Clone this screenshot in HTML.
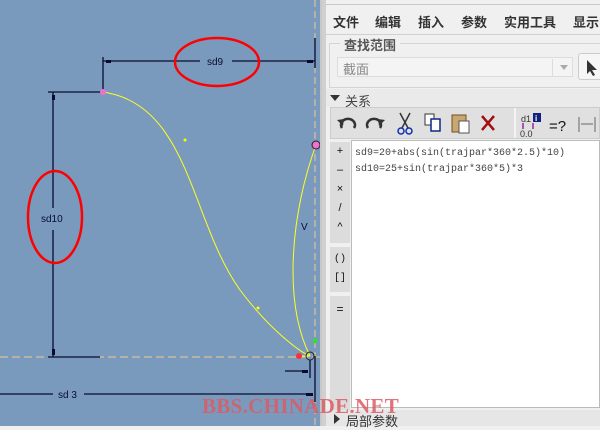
<!DOCTYPE html>
<html><head><meta charset="utf-8"><style>
*{margin:0;padding:0;box-sizing:border-box}
body{width:600px;height:426px;overflow:hidden;position:relative;background:#f0f0f0;font-family:"Liberation Sans","Noto Sans CJK SC",sans-serif}
.a{position:absolute}
.m{top:12px;font-size:13px;color:#333;font-weight:bold}
.mono{font-family:"Liberation Mono","Noto Sans CJK SC",monospace;font-size:10px;color:#444}
</style></head><body>
<svg class="a" style="left:0;top:0" width="322" height="426">
<rect width="322" height="426" fill="#7a9abd"/>
<line x1="315" y1="0" x2="315" y2="426" stroke="#f0c890" stroke-width="1" stroke-dasharray="7,4"/>
<line x1="0" y1="357" x2="320" y2="357" stroke="#f0c890" stroke-width="1" stroke-dasharray="8,4"/>
<g stroke="#0a0a30" stroke-width="1.3" fill="none">
<line x1="103" y1="57" x2="103" y2="92"/><line x1="315" y1="38" x2="315" y2="68"/>
<line x1="103" y1="61" x2="200" y2="61"/><line x1="232" y1="61" x2="315" y2="61"/>
<line x1="48" y1="92" x2="103" y2="92"/><line x1="48" y1="357" x2="100" y2="357"/>
<line x1="53" y1="92" x2="53" y2="208"/><line x1="53" y1="230" x2="53" y2="357"/>
<line x1="0" y1="394" x2="53" y2="394"/><line x1="84" y1="394" x2="313" y2="394"/>
<line x1="315" y1="356" x2="315" y2="402"/><line x1="310" y1="360" x2="310" y2="378"/>
<line x1="285" y1="371" x2="308" y2="371"/>
</g>
<g fill="#0a0a30"><rect x="106" y="60" width="5" height="3"/><rect x="307" y="60" width="6" height="3"/><rect x="52" y="95" width="3" height="5"/><rect x="52" y="349" width="3" height="6"/><rect x="306" y="393" width="7" height="3"/><rect x="302" y="370" width="6" height="3"/></g>
<g font-family="Liberation Sans,sans-serif" font-size="10" fill="#0a0a30">
<text x="207" y="65">sd9</text><text x="41" y="222">sd10</text><text x="58" y="398">sd 3</text><text x="301" y="230">V</text></g>
<g stroke="#ffff20" stroke-width="1" fill="none">
<path d="M103,92 C190,105 190,220 240,290 C270,330 300,352 310,356"/>
<path d="M316,145 C292,210 282,300 310,356"/>
<line x1="300" y1="356" x2="310" y2="356"/></g>
<circle cx="185" cy="140" r="1.5" fill="#ff0"/><circle cx="258" cy="308" r="1.5" fill="#ff0"/>
<circle cx="103" cy="92" r="3" fill="#f070d0"/><circle cx="316" cy="145" r="4" fill="#f070d0" stroke="#222" stroke-width="1"/>
<circle cx="299" cy="356" r="3" fill="#ff3030"/><circle cx="315" cy="341" r="2.5" fill="#30e030"/>
<circle cx="310" cy="356" r="4" fill="none" stroke="#222" stroke-width="1"/>
<ellipse cx="217" cy="62" rx="42" ry="24" fill="none" stroke="#f00" stroke-width="2.5"/>
<ellipse cx="55" cy="217" rx="27" ry="46" fill="none" stroke="#f00" stroke-width="2.5"/>
<rect x="320" y="0" width="2" height="426" fill="#c8c8c8"/>
</svg>
<div class="a" style="left:322px;top:0;width:4px;height:426px;background:#d0d0d0"></div>
<div class="a" style="left:326px;top:4px;width:274px;height:1px;background:#c8c8c8"></div>
<div class="a m" style="left:333px">文件</div><div class="a m" style="left:375px">编辑</div><div class="a m" style="left:418px">插入</div><div class="a m" style="left:461px">参数</div><div class="a m" style="left:504px">实用工具</div><div class="a m" style="left:573px">显示</div>
<div class="a" style="left:326px;top:34px;width:274px;height:1px;background:#d0d0d0"></div>
<div class="a" style="left:329px;top:43px;width:271px;height:45px;border:1px solid #d4d4d4;border-right:none"></div>
<div class="a" style="left:340px;top:35px;background:#f0f0f0;padding:0 4px;font-size:13px;font-weight:bold;color:#555">查找范围</div>
<div class="a" style="left:337px;top:57px;width:236px;height:20px;background:#f4f4f4;border:1px solid #ddd;font-size:13px;color:#888;padding:1px 5px">截面<span class="a" style="left:222px;top:7px;border:4px solid transparent;border-top:5px solid #aaa"></span><span class="a" style="left:214px;top:1px;width:1px;height:17px;background:#ddd"></span></div>
<div class="a" style="left:578px;top:53px;width:30px;height:27px;border:1px solid #ccc;border-radius:3px;background:#f6f6f6"><svg width="14" height="18" style="margin:5px 0 0 7px"><path d="M1,1 L1,15 L4,12 L7,17 L9,16 L6,11 L11,11 Z" fill="#333"/></svg></div>
<div class="a" style="left:326px;top:89px;width:274px;height:18px;background:#eaeaea"></div>
<div class="a" style="left:330px;top:95px;border:5px solid transparent;border-top:6px solid #333"></div>
<div class="a" style="left:345px;top:91px;font-size:13px;color:#444">关系</div>
<div class="a" style="left:330px;top:107px;width:270px;height:32px;background:#e0e0e0;border:1px solid #ccc"></div>
<div class="a" style="left:514px;top:108px;width:2px;height:30px;background:#f4f4f4"></div>
<svg class="a" style="left:334px;top:110px" width="266" height="28">
<path d="M8,18 A7,6 0 1 1 20,18" fill="none" stroke="#333" stroke-width="2.5"/><path d="M3,10 L9,16 L10,9 Z" fill="#333"/>
<path d="M34,18 A7,6 0 1 1 46,18" fill="none" stroke="#333" stroke-width="2.5"/><path d="M51,10 L45,16 L44,9 Z" fill="#333"/>
<path d="M66,3 L74,18 M76,3 L68,18" stroke="#333" stroke-width="1.5"/><circle cx="67" cy="21" r="3" fill="none" stroke="#1030b0" stroke-width="1.5"/><circle cx="75" cy="21" r="3" fill="none" stroke="#1030b0" stroke-width="1.5"/>
<rect x="91" y="4" width="9" height="11" fill="#fff" stroke="#333"/><rect x="97" y="9" width="9" height="12" fill="#fff" stroke="#0a2a80" stroke-width="1.5"/>
<rect x="118" y="5" width="14" height="17" fill="#c8a870" stroke="#705020"/><rect x="125" y="11" width="10" height="12" fill="#fff" stroke="#555"/>
<path d="M148,6 L160,20 M160,6 L148,20" stroke="#a01010" stroke-width="2.5"/>
<text x="187" y="12" font-size="9" fill="#333">d1</text><rect x="199" y="3" width="8" height="9" fill="#102080"/><text x="201" y="11" font-size="8" fill="#fff" font-weight="bold">i</text>
<path d="M189,13 V19 M199,13 V19" stroke="#a020a0" stroke-width="1.5"/><text x="186" y="27" font-size="9" fill="#333">0.0</text>
<text x="215" y="21" font-size="15" fill="#111">=?</text>
<path d="M245,7 V22 M261,7 V22 M247,14 H259" stroke="#666" stroke-width="1"/>
</svg>
<div class="a" style="left:329px;top:140px;width:22px;height:270px;background:#f0f0f0"></div>
<div class="a" style="left:330px;top:142px;width:20px;height:101px;background:#dcdcdc;font-size:11px;text-align:center;line-height:19px;color:#111">+<br>–<br>×<br>/<br>^</div>
<div class="a" style="left:330px;top:247px;width:20px;height:45px;background:#dcdcdc;font-size:10px;text-align:center;line-height:19px;padding-top:3px;font-family:'Liberation Mono',monospace;color:#111">()<br>[]</div>
<div class="a" style="left:330px;top:296px;width:20px;height:114px;background:#dcdcdc;font-size:12px;text-align:center;padding-top:6px;color:#111">=</div>
<div class="a" style="left:351px;top:140px;width:249px;height:268px;background:#fff;border:1px solid #bbb;padding:5px 3px">
<div class="mono" style="line-height:16px">sd9=20+abs(sin(trajpar*360*2.5)*10)<br>sd10=25+sin(trajpar*360*5)*3</div></div>
<div class="a" style="left:326px;top:410px;width:274px;height:16px;background:#e6e6e6"></div>
<div class="a" style="left:334px;top:414px;border:5px solid transparent;border-left:6px solid #333"></div>
<div class="a" style="left:346px;top:411px;font-size:13px;color:#333">局部参数</div>
<div class="a" style="left:202px;top:394px;font-family:'Liberation Serif',serif;font-weight:bold;font-size:21px;color:rgba(220,90,100,0.85);letter-spacing:0.3px">BBS.CHINADE.NET</div>
</body></html>
